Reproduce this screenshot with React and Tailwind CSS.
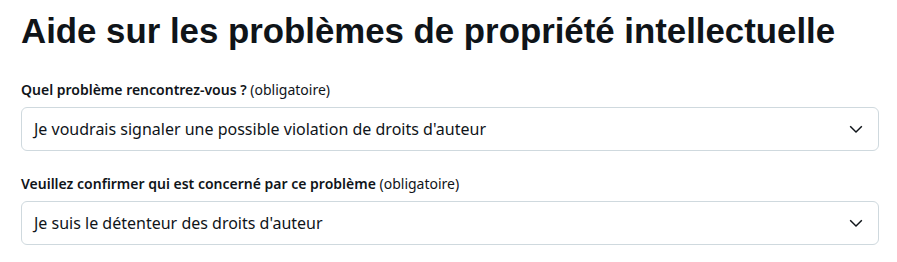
import React from 'react';

const Chevron = () => (
  <svg viewBox="0 0 24 24" className="w-[18px] h-[18px] fill-[#0f1419]" aria-hidden="true">
    <path d="M3.543 8.96l1.414-1.42L12 14.59l7.043-7.05 1.414 1.42L12 17.41 3.543 8.96z" />
  </svg>
);

const SelectField = ({ label, value }) => (
  <div>
    <div className="text-[14px] leading-[20px] text-[#0f1419] mb-[7px]">
      <span className="font-semibold">{label}</span> (obligatoire)
    </div>
    <div className="h-[44px] border border-[#cfd9de] rounded-[6px] pl-[12px] pr-[13px] flex items-center justify-between bg-white">
      <span className="text-[16px] text-[#0f1419]">{value}</span>
      <Chevron />
    </div>
  </div>
);

export default function App() {
  return (
    <div className="bg-white w-[897px] h-[262px] pl-[21px] pr-[18px] pt-[11px] font-['Noto_Sans',sans-serif] text-[#0f1419]">
      <h1 className="font-['Liberation_Sans',Arial,sans-serif] text-[34.8px] leading-[40px] font-bold">
        Aide sur les problèmes de propriété intellectuelle
      </h1>
      <div className="mt-[29px] flex flex-col gap-[23px]">
        <SelectField
          label="Quel problème rencontrez-vous ?"
          value="Je voudrais signaler une possible violation de droits d'auteur"
        />
        <SelectField
          label="Veuillez confirmer qui est concerné par ce problème"
          value="Je suis le détenteur des droits d'auteur"
        />
      </div>
    </div>
  );
}
